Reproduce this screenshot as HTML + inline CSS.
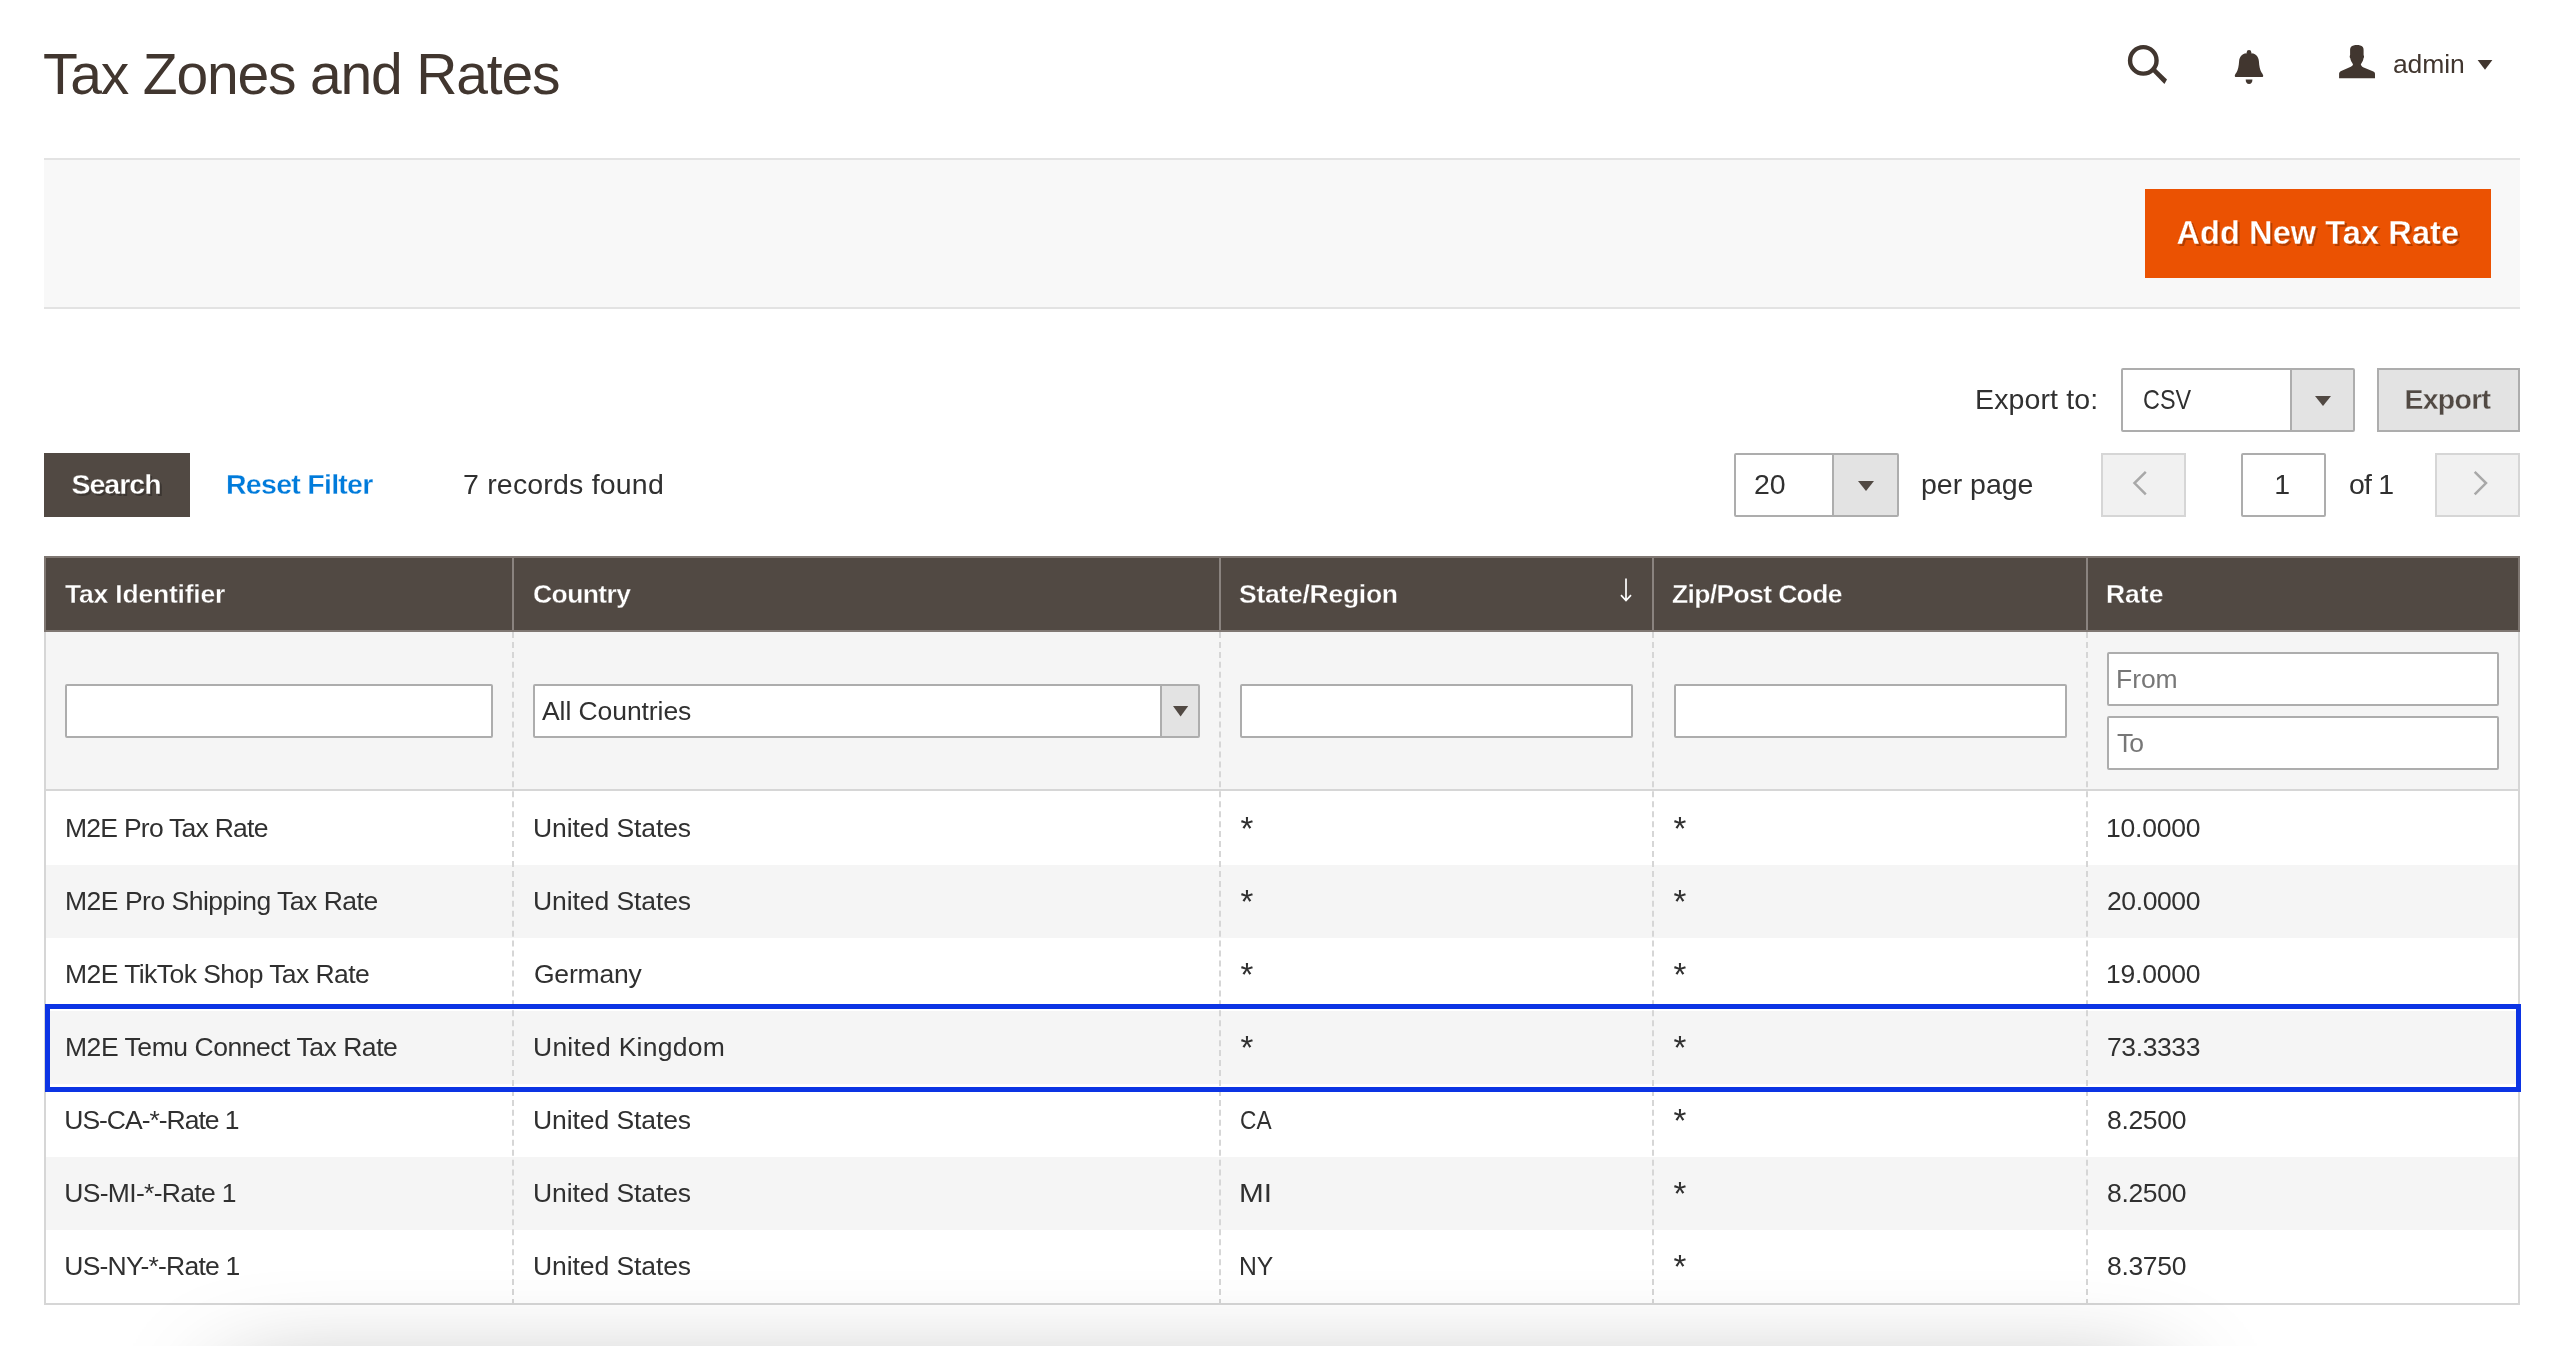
<!DOCTYPE html>
<html lang="en">
<head>
<meta charset="utf-8">
<title>Tax Zones and Rates</title>
<style>
*{box-sizing:border-box;margin:0;padding:0}
html,body{width:2560px;height:1346px;overflow:hidden;background:#fff}
body{position:relative;font-family:"Liberation Sans",sans-serif;color:#303030;font-size:28px}
#page{position:absolute;left:0;top:0;width:2560px;height:1346px;overflow:hidden;will-change:transform}
.abs{position:absolute;white-space:nowrap}
h1.title{position:absolute;left:43px;top:34px;font-weight:400;font-size:57px;line-height:80px;color:#41362f;white-space:nowrap}
.admin{left:2393px;top:48px;font-size:26.500px;line-height:32px;color:#41362f}
.bar{position:absolute;left:44px;top:158px;width:2476px;height:151px;background:#f8f8f8;border-top:2px solid #e3e3e3;border-bottom:2px solid #e3e3e3}
.btn-primary{-webkit-text-stroke:.32px #eb5202;position:absolute;left:2145px;top:189px;width:346px;height:89px;background:#eb5202;color:#fff;font-weight:700;font-size:32.500px;line-height:89px;text-align:center;text-shadow:2px 2px 0 rgba(0,0,0,.25);white-space:nowrap}
.t28{font-size:28.500px;line-height:40px}
.sel{position:absolute;background:#fff;border:2px solid #adadad;border-radius:2px}
.sel .arr{position:absolute;right:0;top:0;bottom:0;width:63px;background:#e3e3e3;border-left:2px solid #adadad}
.sel .arr:after{content:"";position:absolute;left:50%;top:50%;margin:-4px 0 0 -8px;border-style:solid;border-width:10.500px 8px 0 8px;border-color:#514943 transparent transparent transparent}
.btn-sec{-webkit-text-stroke:.3px #e3e3e3;position:absolute;background:#e3e3e3;border:2px solid #adadad;color:#514943;font-weight:700;text-align:center}
.btn-dark{-webkit-text-stroke:.3px #514943;position:absolute;left:44px;top:453px;width:146px;height:64px;background:#514943;color:#fff;font-weight:700;font-size:28.500px;line-height:62px;text-align:center;text-shadow:2px 2px 0 rgba(0,0,0,.25)}
.pg{position:absolute;top:453px;width:85px;height:64px;background:#f1f1f1;border:2px solid #d6d6d6}
.inp{position:absolute;background:#fff;border:2px solid #adadad;border-radius:2px}
/* grid */
.grid{position:absolute;left:44px;top:556px;width:2476px;height:749px}
.thead{position:absolute;left:0;top:0;width:100%;height:76px;background:#514943}
.hframe{position:absolute;left:0;top:0;width:100%;height:76px;border:2px solid #7f7772}
.th{position:absolute;top:0;height:76px;color:#fff;font-weight:700;-webkit-text-stroke:.3px #514943;font-size:26.500px;line-height:77px;padding-left:18px;border-left:2px solid #8a837f;white-space:nowrap}
.frow{position:absolute;left:0;top:76px;width:100%;height:159px;background:#f5f5f5;border-bottom:2px solid #d6d6d6}
.row{position:absolute;left:0;width:100%;height:72.500px;font-size:26.500px;line-height:73px}
.row.alt{background:#f5f5f5}
.c{position:absolute;top:0;height:100%;padding-left:21px;white-space:nowrap}
.tx{position:relative}
.sx{position:relative;display:inline-block;transform-origin:0 50%}
.ast{font-size:33px;line-height:20px;position:relative;top:3px;left:.5px}
.vl{position:absolute;top:76px;bottom:0;width:0;border-left:2px dashed #d6d6d6}
.frame{position:absolute;left:0;top:76px;right:0;bottom:0;border:2px solid #d6d6d6;border-top:0}
.ph{color:#777;font-size:26.500px;line-height:50px;padding-left:8px}
</style>
</head>
<body>
<div id="page">

<h1 class="title"><span class="tx" id="title" style="left:0px;letter-spacing:-1.175px">Tax Zones and Rates</span></h1>

<!-- header icons -->
<svg class="abs" style="left:2120px;top:38px" width="56" height="56" viewBox="0 0 56 56">
  <circle cx="23.300" cy="22.400" r="13.250" fill="none" stroke="#41362f" stroke-width="4.400"/>
  <path d="M32.2 33.6 L35.6 30.4 L47 41.4 L44.4 46 Z" fill="#41362f"/>
</svg>
<svg class="abs" style="left:2229px;top:46px" width="40" height="42" viewBox="0 0 40 42">
  <circle cx="20" cy="6.300" r="2.250" fill="#41362f"/>
  <path d="M20 7C26.600 7 29.600 10.400 29.900 15.200C30.200 20 31 24 32.400 26.200C33 27.200 34 28.400 34.200 29.500C34.300 30.400 33.800 31.100 32.900 31.100H7.100C6.200 31.100 5.700 30.400 5.800 29.500C6 28.400 7 27.200 7.600 26.200C9 24 9.800 20 10.100 15.200C10.400 10.400 13.400 7 20 7Z" fill="#41362f"/>
  <path d="M16.700 33.600h6.700a3.350 4.400 0 0 1-6.700 0z" fill="#41362f"/>
</svg>
<svg class="abs" style="left:2336px;top:42px" width="42" height="40" viewBox="0 0 42 40">
  <path d="M20.900 2.900C23 2.900 25.600 3.300 26.800 5C27.600 6.200 27.600 7.400 27.600 8.600V13.200C28.200 13.600 28.300 15.400 27.500 16.300C27.200 18.200 26.400 19.900 25.600 21.100C25.300 21.700 25 22.200 24.800 22.600C25.200 23.800 26 24.700 27.100 25.200L36.800 29.200C38.300 29.800 39 30.600 39 32V36.200H3.100V32C3.100 30.600 3.800 29.600 5.200 29L14.800 24.800C15.900 24.300 16.700 23.600 17 22.600C16.800 22.200 16.500 21.700 16.300 21.100C15.400 19.900 14.600 18.200 14.300 16.300C13.500 15.400 13.600 13.600 14.100 13.200V8.600C14.100 7.400 14.100 6.200 14.900 5C16.100 3.300 18.800 2.900 20.900 2.900Z" fill="#41362f"/>
</svg>
<div class="abs admin"><span class="tx" id="admin" style="left:0px;letter-spacing:-0.12px">admin</span></div>
<svg class="abs" style="left:2477px;top:60px" width="16" height="10" viewBox="0 0 16 10"><path d="M.6 0h14.800L8 9.800z" fill="#41362f"/></svg>

<!-- action bar -->
<div class="bar"></div>
<div class="btn-primary"><span class="tx" id="addnew" style="left:-0.18px;letter-spacing:0.097px">Add New Tax Rate</span></div>

<!-- export row -->
<div class="abs t28" style="left:1975px;top:379px"><span class="tx" id="exportto" style="left:0px;letter-spacing:0.133px">Export to:</span></div>
<div class="sel" style="left:2121px;top:368px;width:234px;height:64px"><div class="abs t28" style="left:20px;top:9px"><span class="sx" id="csv" style="left:0px;transform:scaleX(0.82)">CSV</span></div><div class="arr"></div></div>
<div class="btn-sec t28" style="left:2377px;top:368px;width:143px;height:64px;line-height:59px"><span class="tx" id="export" style="left:-1.17px;letter-spacing:-0.724px">Export</span></div>

<!-- toolbar row -->
<div class="btn-dark"><span class="tx" id="search" style="left:-0.94px;letter-spacing:-0.976px">Search</span></div>
<div class="abs t28" style="left:226px;top:464px;color:#007bdb;font-weight:700;-webkit-text-stroke:.3px #fff"><span class="tx" id="reset" style="left:0px;letter-spacing:-0.717px">Reset Filter</span></div>
<div class="abs t28" style="left:463px;top:464px"><span class="tx" id="records" style="left:0px;letter-spacing:0.193px">7 records found</span></div>

<div class="sel" style="left:1734px;top:453px;width:165px;height:64px"><div class="abs t28" style="left:18px;top:9px"><span class="tx" id="n20" style="left:0px;letter-spacing:0px">20</span></div><div class="arr" style="width:65px"></div></div>
<div class="abs t28" style="left:1921px;top:464px"><span class="tx" id="perpage" style="left:0px;letter-spacing:-0.015px">per page</span></div>

<div class="pg" style="left:2101px"><svg class="abs" style="left:25.500px;top:12px" width="24" height="32" viewBox="0 0 24 32"><path d="M16.800 4.900L5.500 16.100L16.800 27.300" fill="none" stroke="#a8a8a8" stroke-width="2.500"/></svg></div>
<div class="inp" style="left:2241px;top:453px;width:85px;height:64px"><div class="abs t28" style="left:0;width:78px;top:9px;text-align:center"><span class="tx" id="pg1" style="left:0.23px;letter-spacing:0px">1</span></div></div>
<div class="abs t28" style="left:2349px;top:464px"><span class="tx" id="of1" style="left:0px;letter-spacing:-0.813px">of 1</span></div>
<div class="pg" style="left:2435px"><svg class="abs" style="left:29.500px;top:12px" width="24" height="32" viewBox="0 0 24 32"><path d="M7.700 4.900L19 16.100L7.700 27.300" fill="none" stroke="#a8a8a8" stroke-width="2.500"/></svg></div>

<!-- grid -->
<div class="grid">
  <div class="thead">
    <div class="th" style="left:0;width:469px;border-left:0;padding-left:21px"><span class="tx" id="th1" style="left:0px;letter-spacing:-0.203px">Tax Identifier</span></div>
    <div class="th" style="left:468px;width:707px;padding-left:19px"><span class="tx" id="th2" style="left:0px;letter-spacing:-0.587px">Country</span></div>
    <div class="th" style="left:1175px;width:433px"><span class="tx" id="th3" style="left:0px;letter-spacing:-0.267px">State/Region</span></div>
    <div class="th" style="left:1608px;width:434px"><span class="tx" id="th4" style="left:0px;letter-spacing:-0.64px">Zip/Post Code</span></div>
    <div class="th" style="left:2042px;width:434px"><span class="tx" id="th5" style="left:0px;letter-spacing:-0.023px">Rate</span></div>
    <svg class="abs" style="left:1574px;top:20px" width="16" height="28" viewBox="0 0 16 28"><path d="M8 2.500V24M3 19.200L8 24.600L13 19.200" fill="none" stroke="#fff" stroke-width="1.700"/></svg>
    <div class="hframe"></div>
  </div>

  <div class="frow">
    <div class="inp" style="left:21px;top:52px;width:428px;height:54px"></div>
    <div class="inp" style="left:489px;top:52px;width:667px;height:54px"><div class="abs" style="left:7px;top:0;font-size:26.500px;line-height:51px"><span class="tx" id="allc" style="left:0px;letter-spacing:-0.073px">All Countries</span></div><div class="abs" style="right:0;top:0;width:38px;height:50px;background:#e3e3e3;border-left:2px solid #adadad"><svg class="abs" style="left:10.500px;top:20px" width="16" height="11" viewBox="0 0 16 11"><path d="M0 0h15.200L7.600 10.500z" fill="#514943"/></svg></div></div>
    <div class="inp" style="left:1196px;top:52px;width:393px;height:54px"></div>
    <div class="inp" style="left:1630px;top:52px;width:393px;height:54px"></div>
    <div class="inp" style="left:2063px;top:20px;width:392px;height:54px"><div class="ph"><span class="tx" id="from" style="left:-0.99px;letter-spacing:-0.054px">From</span></div></div>
    <div class="inp" style="left:2063px;top:84px;width:392px;height:54px"><div class="ph"><span class="tx" id="to" style="left:0px;letter-spacing:-0.96px">To</span></div></div>
  </div>

  <div class="row" style="top:236px"><div class="c" style="left:0px"><span class="tx" id="r1c1" style="left:0px;letter-spacing:-0.739px">M2E Pro Tax Rate</span></div><div class="c" style="left:468px"><span class="tx" id="r1c2" style="left:0px;letter-spacing:-0.083px">United States</span></div><div class="c" style="left:1175px"><span class="ast">*</span></div><div class="c" style="left:1608px"><span class="ast">*</span></div><div class="c" style="left:2042px"><span class="tx" id="r1c5" style="left:-1.08px;letter-spacing:-0.2px">10.0000</span></div></div>
  <div class="row alt" style="top:309px"><div class="c" style="left:0px"><span class="tx" id="r2c1" style="left:0px;letter-spacing:-0.493px">M2E Pro Shipping Tax Rate</span></div><div class="c" style="left:468px"><span class="tx" id="r2c2" style="left:0px;letter-spacing:-0.083px">United States</span></div><div class="c" style="left:1175px"><span class="ast">*</span></div><div class="c" style="left:1608px"><span class="ast">*</span></div><div class="c" style="left:2042px"><span class="tx" id="r2c5" style="left:0px;letter-spacing:-0.4px">20.0000</span></div></div>
  <div class="row" style="top:382px"><div class="c" style="left:0px"><span class="tx" id="r3c1" style="left:0px;letter-spacing:-0.56px">M2E TikTok Shop Tax Rate</span></div><div class="c" style="left:468px"><span class="tx" id="r3c2" style="left:0.9px;letter-spacing:-0.183px">Germany</span></div><div class="c" style="left:1175px"><span class="ast">*</span></div><div class="c" style="left:1608px"><span class="ast">*</span></div><div class="c" style="left:2042px"><span class="tx" id="r3c5" style="left:-1.08px;letter-spacing:-0.2px">19.0000</span></div></div>
  <div class="row alt" style="top:455px"><div class="c" style="left:0px"><span class="tx" id="r4c1" style="left:0px;letter-spacing:-0.454px">M2E Temu Connect Tax Rate</span></div><div class="c" style="left:468px"><span class="tx" id="r4c2" style="left:0px;letter-spacing:0.246px">United Kingdom</span></div><div class="c" style="left:1175px"><span class="ast">*</span></div><div class="c" style="left:1608px"><span class="ast">*</span></div><div class="c" style="left:2042px"><span class="tx" id="r4c5" style="left:0px;letter-spacing:-0.4px">73.3333</span></div></div>
  <div class="row" style="top:528px"><div class="c" style="left:0px"><span class="tx" id="r5c1" style="left:-0.72px;letter-spacing:-1.016px">US-CA-*-Rate 1</span></div><div class="c" style="left:468px"><span class="tx" id="r5c2" style="left:0px;letter-spacing:-0.083px">United States</span></div><div class="c" style="left:1175px"><span class="sx" id="r5c3" style="left:0px;transform:scaleX(0.856)">CA</span></div><div class="c" style="left:1608px"><span class="ast">*</span></div><div class="c" style="left:2042px"><span class="tx" id="r5c5" style="left:0px;letter-spacing:-0.324px">8.2500</span></div></div>
  <div class="row alt" style="top:601px"><div class="c" style="left:0px"><span class="tx" id="r6c1" style="left:-0.72px;letter-spacing:-0.682px">US-MI-*-Rate 1</span></div><div class="c" style="left:468px"><span class="tx" id="r6c2" style="left:0px;letter-spacing:-0.083px">United States</span></div><div class="c" style="left:1175px"><span class="sx" id="r6c3" style="left:-0.99px;transform:scaleX(1.12)">MI</span></div><div class="c" style="left:1608px"><span class="ast">*</span></div><div class="c" style="left:2042px"><span class="tx" id="r6c5" style="left:0px;letter-spacing:-0.324px">8.2500</span></div></div>
  <div class="row" style="top:674px"><div class="c" style="left:0px"><span class="tx" id="r7c1" style="left:-0.72px;letter-spacing:-0.775px">US-NY-*-Rate 1</span></div><div class="c" style="left:468px"><span class="tx" id="r7c2" style="left:0px;letter-spacing:-0.083px">United States</span></div><div class="c" style="left:1175px"><span class="sx" id="r7c3" style="left:-0.99px;transform:scaleX(0.933)">NY</span></div><div class="c" style="left:1608px"><span class="ast">*</span></div><div class="c" style="left:2042px"><span class="tx" id="r7c5" style="left:0px;letter-spacing:-0.324px">8.3750</span></div></div>

  <div class="vl" style="left:468px"></div>
  <div class="vl" style="left:1175px"></div>
  <div class="vl" style="left:1608px"></div>
  <div class="vl" style="left:2042px"></div>
  <div class="frame"></div>

  <!-- highlighted row outline -->
  <div class="abs" style="left:1px;top:448px;width:2476px;height:88px;border:5px solid #0c34e4"></div>
</div>

<!-- bottom shadow -->
<div class="abs" style="left:230px;top:1390px;width:1930px;height:80px;box-shadow:0 0 110px 0 rgba(0,0,0,.42)"></div>

</div>
</body>
</html>
